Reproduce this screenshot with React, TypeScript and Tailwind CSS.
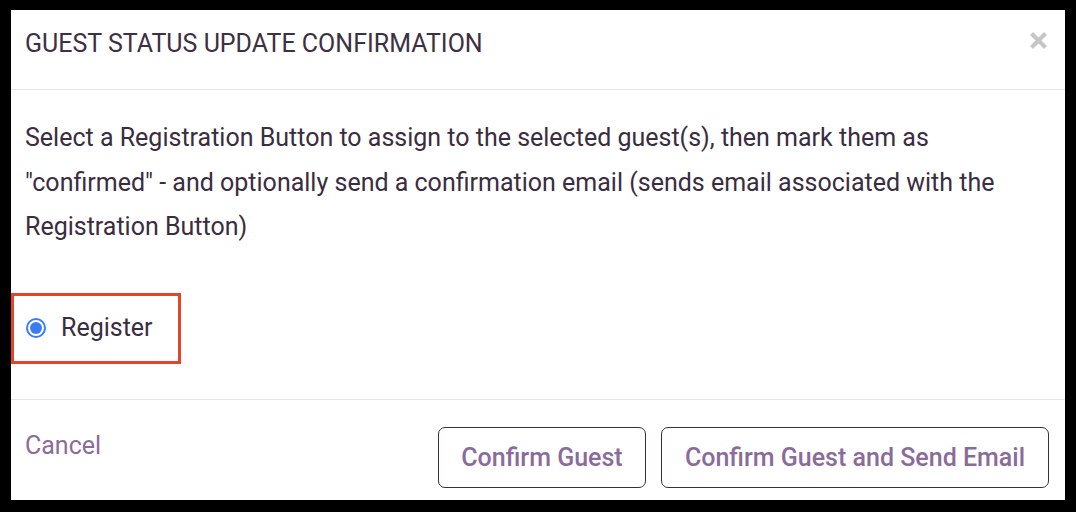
import React from "react";

export default function App() {
  return (
    <div className="w-[1076px] h-[512px] bg-black pt-[10px] pl-[11px] pr-[11px] pb-[12px]" style={{ fontFamily: "Roboto, 'Liberation Sans', sans-serif" }}>
      <div className="w-full h-full bg-white flex flex-col">
        <div className="h-[80px] flex items-start justify-between pl-[14px] pr-[17px] border-b border-[#e6e6e6] shrink-0">
          <h1 className="mt-[15px] text-[25px] leading-[37px] text-[#3d3043] font-normal">GUEST STATUS UPDATE CONFIRMATION</h1>
          <svg width="19" height="19" viewBox="0 0 19 19" className="mt-[21px]">
            <path d="M2.5 2.5 L16.5 16.5 M16.5 2.5 L2.5 16.5" stroke="#c6c6c6" strokeWidth="4.2" strokeLinecap="butt" />
          </svg>
        </div>
        <div className="flex-1 flex flex-col pt-[26px] border-b border-[#e6e6e6]">
          <p className="pl-[14px] pr-[20px] text-[25px] leading-[44.5px] text-[#3a2d40]">
            Select a Registration Button to assign to the selected guest(s), then mark them as "confirmed" - and optionally send a confirmation email (sends email associated with the Registration Button)
          </p>
          <div className="mt-[43px] w-[170px] h-[71px] border-[3px] border-[#e5432a] flex items-center pl-[12px] gap-[15px]">
            <span className="w-[20px] h-[20px] rounded-full border-2 border-[#3b7cf5] flex items-center justify-center">
              <span className="w-[12px] h-[12px] rounded-full bg-[#3b7cf5]" />
            </span>
            <span className="text-[25px] text-[#3a2d40]">Register</span>
          </div>
        </div>
        <div className="h-[100px] shrink-0 flex items-start justify-between pl-[14px] pr-[16px] pt-[27px]">
          <a className="text-[25px] text-[#8a6c9b]">Cancel</a>
          <div className="flex gap-[15px]">
            <button className="h-[61px] w-[208px] border border-[#3a2d40] rounded-[7px] text-[25px] font-medium text-[#8a6c9b]">Confirm Guest</button>
            <button className="h-[61px] w-[388px] border border-[#3a2d40] rounded-[7px] text-[25px] font-medium text-[#8a6c9b]">Confirm Guest and Send Email</button>
          </div>
        </div>
      </div>
    </div>
  );
}
